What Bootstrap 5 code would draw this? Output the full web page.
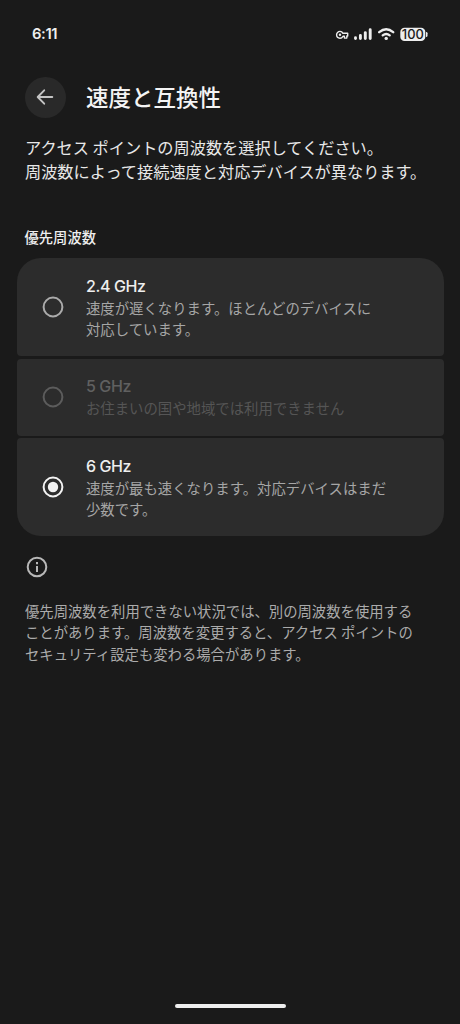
<!DOCTYPE html>
<html lang="ja">
<head>
<meta charset="utf-8">
<meta name="viewport" content="width=device-width, initial-scale=1">
<title>速度と互換性</title>
<link href="https://cdn.jsdelivr.net/npm/bootstrap@5.3.0/dist/css/bootstrap.min.css" rel="stylesheet">
<style>
html,body{height:100%}
body{background:#1a1a1a;color:#eee;font-family:"Noto Sans CJK JP",sans-serif;overflow:hidden}
.screen{width:460px;height:1024px}
.statusbar{height:68px;padding:0 32px}
.clock{font:600 14.8px/20px Inter,sans-serif;letter-spacing:-.4px}
.topbar{height:58px;padding:0 24.5px;gap:20.5px}
.back-btn{width:41px;height:41px;background:#292929}
.screen-title{font-size:22.5px;line-height:30px;font-weight:500;color:#f4f4f4;padding-bottom:2px}
.intro{font-size:16.2px;line-height:24.3px;margin:9px 0 0 25px;color:#e8e8e8;white-space:nowrap}
.section-label{font-size:14.3px;line-height:22px;font-weight:500;margin:42px 0 0 24.5px}
.options{margin:10.5px 16.5px 0;gap:2.5px}
.option{background:#2c2c2c;border-radius:4px;padding:0 0 0 25.5px;gap:22px}
.option:first-child{height:98px;border-radius:24px 24px 4px 4px}
.option:nth-child(2){height:77px;color:#606060}
.option:last-child{height:98px;border-radius:4px 4px 24px 24px}
.opt-name{font:500 16px/22px Inter,sans-serif;letter-spacing:-.4px}
.opt-desc{font-size:14.38px;line-height:21.3px;color:#a6a6a6;white-space:nowrap}
.option:nth-child(2) .opt-desc{color:#555}
.info-icon{margin:20px 0 0 26px}
.footnote{font-size:14.35px;line-height:21.3px;color:#ababab;margin:22px 0 0 25px;white-space:nowrap}
.homebar{width:111px;height:4px;background:#eee;margin-bottom:16.5px}
</style>
</head>
<body>
<div class="screen d-flex flex-column">
  <header class="statusbar d-flex align-items-center justify-content-between">
    <div class="clock">6:11</div>
    <svg width="94" height="16" viewBox="0 0 94 16" fill="#eee">
      <g transform="translate(1 .6)">
        <path d="M8 6.7C7.3 5.4 6.3 4.8 5 4.8a3.4 3.4 0 1 0 0 6.8c1.3 0 2.3-.7 3-1.9h1.4v1.8h2.4V9.4h.9V6.7z" fill="none" stroke="#eee" stroke-width="1.4" stroke-linejoin="round"/>
        <circle cx="5" cy="8.2" r="1.2"/>
      </g>
      <g stroke="#eee" stroke-width="2.9" stroke-linecap="round"><path d="M21.5 11.8v.8M26.4 9.4v3.2M31.3 6.6v6M36.2 3.8v8.8"/></g>
      <g fill="none" stroke="#eee" stroke-width="2.3" stroke-linecap="round"><path d="M45.2 6.2q7-6 14 0M48.7 9.4q3.5-2.8 7 0"/></g>
      <circle cx="52.2" cy="12.4" r="1.7"/>
      <rect x="66.3" y="1.7" width="25" height="13.4" rx="4.2"/>
      <path d="M92 5.9q1.5 0 1.5 1.4v2.4q0 1.4-1.5 1.4z"/>
      <text x="78.8" y="13" text-anchor="middle" font-family="Inter,sans-serif" font-size="12.6" font-weight="500" fill="#1a1a1a" textLength="22" lengthAdjust="spacingAndGlyphs">100</text>
    </svg>
  </header>
  <div class="topbar d-flex align-items-center">
    <button class="back-btn btn border-0 rounded-circle p-0 d-flex align-items-center justify-content-center" aria-label="戻る">
      <svg width="20" height="20" viewBox="0 0 20 20" fill="none" stroke="#c4c4c4" stroke-width="1.9" stroke-linecap="round" stroke-linejoin="round"><path d="M17.3 10H2.9M9.2 3.3 2.7 10l6.5 6.7"/></svg>
    </button>
    <h1 class="screen-title m-0">速度と互換性</h1>
  </div>
  <p class="intro mb-0">アクセス ポイントの周波数を選択してください。<br>周波数によって接続速度と対応デバイスが異なります。</p>
  <h2 class="section-label mb-0">優先周波数</h2>
  <div class="options d-flex flex-column">
    <div class="option d-flex align-items-center">
      <svg class="flex-shrink-0" width="22" height="22" viewBox="0 0 22 22" fill="none" stroke="#ababab" stroke-width="2"><circle cx="11" cy="11" r="9.4"/></svg>
      <div><div class="opt-name">2.4 GHz</div><div class="opt-desc">速度が遅くなります。ほとんどのデバイスに<br>対応しています。</div></div>
    </div>
    <div class="option d-flex align-items-center">
      <svg class="flex-shrink-0" width="22" height="22" viewBox="0 0 22 22" fill="none" stroke="#5c5c5c" stroke-width="2"><circle cx="11" cy="11" r="9.4"/></svg>
      <div><div class="opt-name">5 GHz</div><div class="opt-desc">お住まいの国や地域では利用できません</div></div>
    </div>
    <div class="option d-flex align-items-center">
      <svg class="flex-shrink-0" width="22" height="22" viewBox="0 0 22 22" fill="none" stroke="#f2f2f2" stroke-width="2"><circle cx="11" cy="11" r="9.4"/><circle cx="11" cy="11" r="5.2" fill="#f2f2f2" stroke="none"/></svg>
      <div><div class="opt-name">6 GHz</div><div class="opt-desc">速度が最も速くなります。対応デバイスはまだ<br>少数です。</div></div>
    </div>
  </div>
  <svg class="info-icon flex-shrink-0" width="22" height="22" viewBox="0 0 22 22" fill="none" stroke="#b8b8b8" stroke-width="2"><circle cx="11" cy="11" r="9.3"/><path d="M11 10v6M11 6v2.2"/></svg>
  <p class="footnote mb-0">優先周波数を利用できない状況では、別の周波数を使用する<br>ことがあります。周波数を変更すると、アクセス ポイントの<br>セキュリティ設定も変わる場合があります。</p>
  <div class="homebar rounded-pill mt-auto mx-auto"></div>
</div>
<script src="https://cdn.jsdelivr.net/npm/bootstrap@5.3.0/dist/js/bootstrap.bundle.min.js"></script>
</body>
</html>
